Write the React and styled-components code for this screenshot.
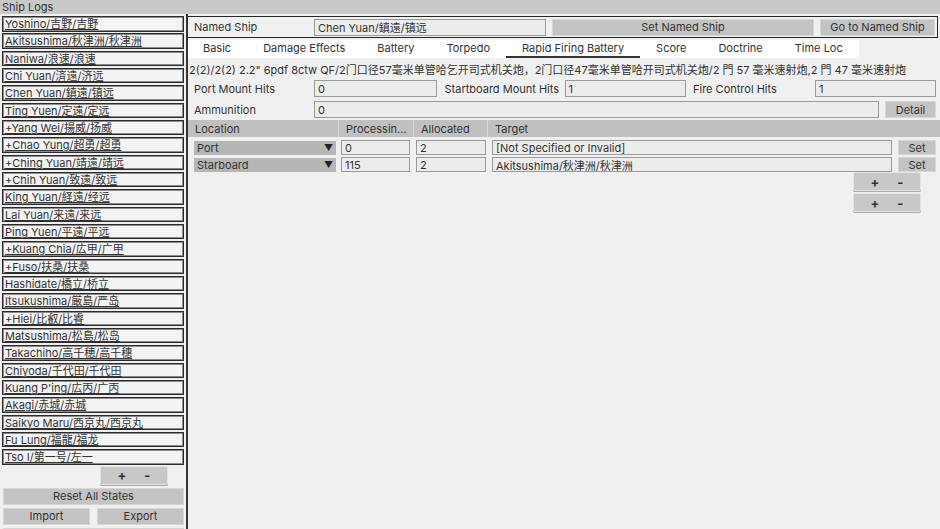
import React from 'react';
import styled, { createGlobalStyle } from 'styled-components';

const GlobalStyle = createGlobalStyle`
  html, body {
    margin: 0;
    padding: 0;
    background: #f0f0f0;
  }
  body {
    font-family: Inter, "Noto Sans CJK SC", sans-serif;
    font-size: 11px;
    color: #333;
  }
`;

const Screen = styled.div`
  width: 940px;
  height: 529px;
  overflow: hidden;
  display: flex;
  flex-direction: column;
  background: #f0f0f0;
`;

const TitleBar = styled.div`
  height: 14px;
  line-height: 14px;
  padding-left: 2px;
  background: #c9c9c9;
  color: #333;
  flex-shrink: 0;
`;

const Body = styled.div`
  flex: 1;
  display: flex;
  min-height: 0;
`;

const Sidebar = styled.div`
  width: 186px;
  flex-shrink: 0;
  padding: 2px 2px 0 2px;
  box-sizing: border-box;
  display: flex;
  flex-direction: column;
`;

const ShipList = styled.div`
  display: flex;
  flex-direction: column;
  gap: 1.84px;
`;

const ShipItem = styled.div`
  height: 15.5px;
  box-sizing: border-box;
  border: 1px solid #2c2c2c;
  box-shadow: inset 0 0 0 1px #8c8c8c;
  background: #f3f3f3;
  padding-left: 2px;
  line-height: 14px;
  text-decoration: underline;
  white-space: nowrap;
  overflow: hidden;
`;

const Button = styled.div`
  display: flex;
  align-items: center;
  justify-content: center;
  box-sizing: border-box;
  background: #c3c3c3;
  border: 1px solid #d6d6d6;
  color: #333;
  height: ${(p) => p.$h || 17}px;
  width: ${(p) => (p.$w ? `${p.$w}px` : 'auto')};
  flex: ${(p) => (p.$grow ? 1 : '0 0 auto')};
  border-radius: ${(p) => (p.$round ? 2 : 0)}px;
  white-space: nowrap;
`;

const PlusMinus = styled(Button)`
  gap: 18px;
  font-weight: 700;
  font-size: 13px;
  background: #c8c8c8;
  border: 1px solid #e4e4e4;
  box-shadow: 0 1px 0 #aaa;
`;

const SideRow = styled.div`
  display: flex;
  gap: 7px;
  margin-top: ${(p) => p.$mt || 0}px;
  padding-left: ${(p) => p.$pl || 1}px;
`;

const Main = styled.div`
  flex: 1;
  border-left: 2px solid #333;
  display: flex;
  flex-direction: column;
  padding-top: 2px;
  min-width: 0;
`;

const NamedBar = styled.div`
  height: 22px;
  box-sizing: border-box;
  border: 1px solid #262626;
  border-left: none;
  margin-right: 2px;
  display: flex;
  align-items: center;
  gap: 6px;
  padding-right: 2px;
`;

const Label = styled.div`
  box-sizing: border-box;
  width: ${(p) => p.$w || 120}px;
  padding-left: ${(p) => p.$pl || 6}px;
  flex-shrink: 0;
  white-space: nowrap;
`;

const Field = styled.div`
  box-sizing: border-box;
  height: ${(p) => p.$h || 17}px;
  width: ${(p) => (p.$w ? `${p.$w}px` : 'auto')};
  flex: ${(p) => (p.$grow ? 1 : '0 0 auto')};
  background: #ececec;
  border: 1px solid #9a9a9a;
  padding-left: 3px;
  display: flex;
  align-items: center;
  white-space: nowrap;
  overflow: hidden;
`;

const Tabs = styled.div`
  display: flex;
  align-self: flex-start;
  background: #fff;
  height: 18px;
  margin-top: 2px;
`;

const Tab = styled.div`
  padding: 0 16px;
  display: flex;
  align-items: center;
  box-sizing: border-box;
  border-bottom: 2px solid ${(p) => (p.$active ? '#333' : 'transparent')};
  white-space: nowrap;
  ${(p) => p.$first && 'padding-left: 15px;'}
`;

const Description = styled.div`
  padding: 5px 0 0 1px;
  height: 16px;
  line-height: 14px;
  white-space: nowrap;
`;

const FormRow = styled.div`
  display: flex;
  align-items: center;
  height: 17px;
  margin-top: ${(p) => p.$mt || 0}px;
  padding-right: 4px;
`;

const FieldGroup = styled.div`
  display: flex;
  align-items: center;
  width: ${(p) => p.$w}px;
`;

const TableHeader = styled.div`
  margin-top: 2px;
  height: 17px;
  background: #c0c0c0;
  display: grid;
  grid-template-columns: 151px 75px 74px 1fr;
`;

const HeaderCell = styled.div`
  padding-left: 7px;
  display: flex;
  align-items: center;
  border-right: ${(p) => (p.$last ? 'none' : '1px solid #d8d8d8')};
`;

const TableRow = styled.div`
  display: flex;
  align-items: center;
  height: 15px;
  margin-top: ${(p) => p.$mt || 2}px;
  padding-left: 6px;
  gap: 6px;
`;

const Dropdown = styled.div`
  width: 142px;
  height: 14px;
  box-sizing: border-box;
  background: #b6b6b6;
  padding: 0 3px 0 3px;
  display: flex;
  align-items: center;
  justify-content: space-between;
  flex-shrink: 0;
  margin-right: -1px;
`;

const Arrow = styled.span`
  font-size: 9px;
  color: #222;
`;

const AddRow = styled.div`
  display: flex;
  justify-content: flex-end;
  padding-right: 19px;
  margin-top: ${(p) => p.$mt || 0}px;
`;

const ships = [
  'Yoshino/吉野/吉野',
  'Akitsushima/秋津洲/秋津洲',
  'Naniwa/浪速/浪速',
  'Chi Yuan/済遠/济远',
  'Chen Yuan/鎮遠/镇远',
  'Ting Yuen/定遠/定远',
  '+Yang Wei/揚威/扬威',
  '+Chao Yung/超勇/超勇',
  '+Ching Yuan/靖遠/靖远',
  '+Chih Yuan/致遠/致远',
  'King Yuan/経遠/经远',
  'Lai Yuan/来遠/来远',
  'Ping Yuen/平遠/平远',
  '+Kuang Chia/広甲/广甲',
  '+Fuso/扶桑/扶桑',
  'Hashidate/橋立/桥立',
  'Itsukushima/厳島/严岛',
  '+Hiei/比叡/比睿',
  'Matsushima/松島/松岛',
  'Takachiho/高千穂/高千穗',
  'Chiyoda/千代田/千代田',
  "Kuang P'ing/広丙/广丙",
  'Akagi/赤城/赤城',
  'Saikyo Maru/西京丸/西京丸',
  'Fu Lung/福龍/福龙',
  'Tso I/第一号/左一',
];

const tabs = [
  'Basic',
  'Damage Effects',
  'Battery',
  'Torpedo',
  'Rapid Firing Battery',
  'Score',
  'Doctrine',
  'Time Loc',
];

const mounts = [
  { loc: 'Port', processing: '0', allocated: '2', target: '[Not Specified or Invalid]' },
  { loc: 'Starboard', processing: '115', allocated: '2', target: 'Akitsushima/秋津洲/秋津洲' },
];

const PlusMinusButton = (props) => (
  <PlusMinus $round $h={19} {...props}>
    <span>+</span>
    <span>-</span>
  </PlusMinus>
);

export default function App() {
  return (
    <Screen>
      <GlobalStyle />
      <TitleBar>Ship Logs</TitleBar>
      <Body>
        <Sidebar>
          <ShipList>
            {ships.map((s) => (
              <ShipItem key={s}>{s}</ShipItem>
            ))}
          </ShipList>
          <SideRow $pl={98} $mt={1}>
            <PlusMinusButton $w={68} />
          </SideRow>
          <SideRow $mt={3}>
            <Button $grow>Reset All States</Button>
          </SideRow>
          <SideRow $mt={3}>
            <Button $grow>Import</Button>
            <Button $grow>Export</Button>
          </SideRow>
          <SideRow $mt={3}>
            <Button $grow> </Button>
          </SideRow>
        </Sidebar>
        <Main>
          <NamedBar>
            <Label $w={120}>Named Ship</Label>
            <Field $w={232}>Chen Yuan/鎮遠/镇远</Field>
            <Button $w={262}>Set Named Ship</Button>
            <Button $w={115}>Go to Named Ship</Button>
          </NamedBar>
          <Tabs>
            {tabs.map((t, i) => (
              <Tab key={t} $first={i === 0} $active={t === 'Rapid Firing Battery'}>
                {t}
              </Tab>
            ))}
          </Tabs>
          <Description>
            2(2)/2(2) 2.2" 6pdf 8ctw QF/2门口径57毫米单管哈乞开司式机关炮，2门口径47毫米单管哈开司式机关炮/2 門 57 毫米速射炮,2 門 47 毫米速射炮
          </Description>
          <FormRow $mt={1}>
            <FieldGroup $w={252}>
              <Label $w={126}>Port Mount Hits</Label>
              <Field $w={123}>0</Field>
            </FieldGroup>
            <FieldGroup $w={250}>
              <Label $w={126} $pl={6}>Startboard Mount Hits</Label>
              <Field $w={121}>1</Field>
            </FieldGroup>
            <FieldGroup $w={249}>
              <Label $w={128} $pl={6}>Fire Control Hits</Label>
              <Field $w={121}>1</Field>
            </FieldGroup>
          </FormRow>
          <FormRow $mt={4}>
            <Label $w={126}>Ammunition</Label>
            <Field $grow>0</Field>
            <Button $w={51} style={{ marginLeft: 6 }}>Detail</Button>
          </FormRow>
          <TableHeader>
            <HeaderCell>Location</HeaderCell>
            <HeaderCell>Processin...</HeaderCell>
            <HeaderCell>Allocated</HeaderCell>
            <HeaderCell $last>Target</HeaderCell>
          </TableHeader>
          {mounts.map((m, i) => (
            <TableRow key={m.loc} $mt={i === 0 ? 3 : 2}>
              <Dropdown>
                <span>{m.loc}</span>
                <Arrow>▼</Arrow>
              </Dropdown>
              <Field $w={69} $h={15}>{m.processing}</Field>
              <Field $w={70} $h={15}>{m.allocated}</Field>
              <Field $w={400} $h={15}>{m.target}</Field>
              <Button $w={38} $h={15}>Set</Button>
            </TableRow>
          ))}
          <AddRow $mt={0}>
            <PlusMinusButton $w={68} />
          </AddRow>
          <AddRow $mt={2}>
            <PlusMinusButton $w={68} />
          </AddRow>
        </Main>
      </Body>
    </Screen>
  );
}
